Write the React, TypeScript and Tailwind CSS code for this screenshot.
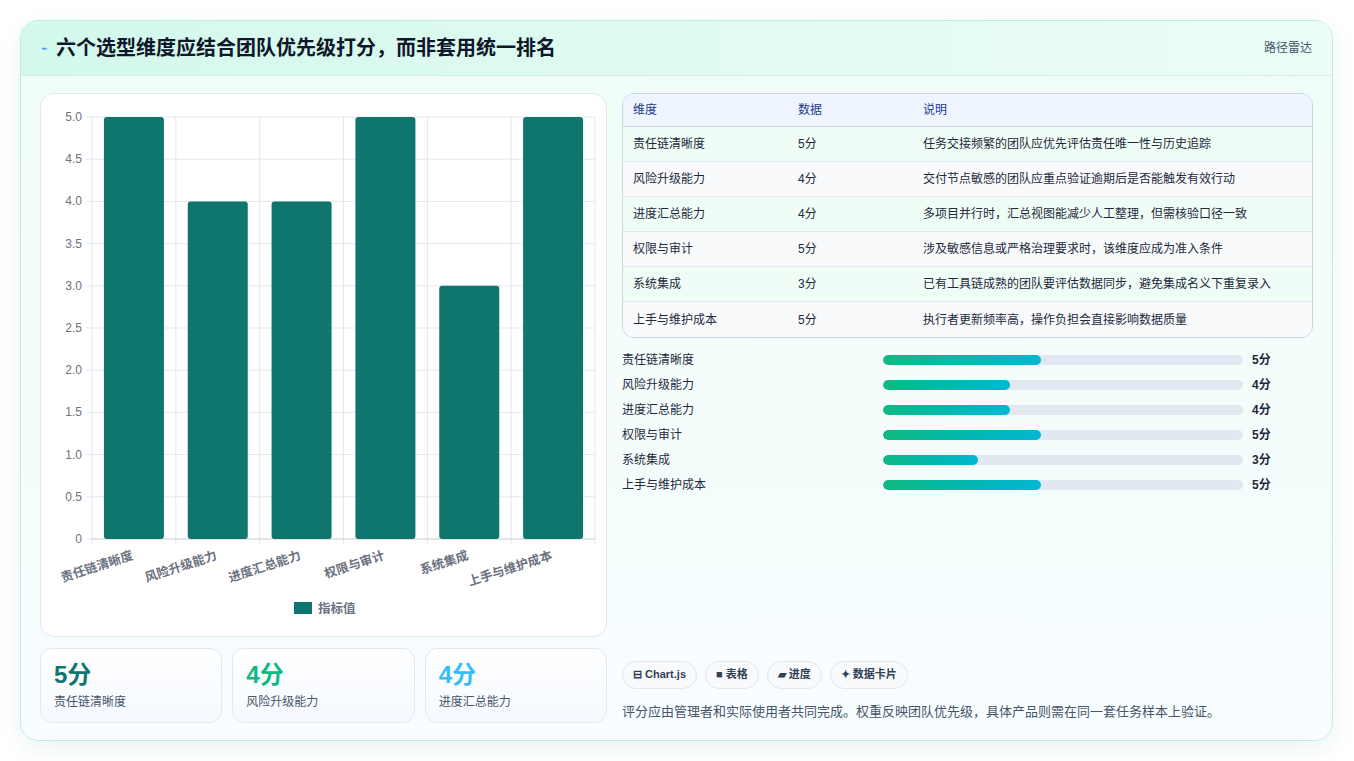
import React from "react";

const dims = [
  { n: "责任链清晰度", v: 5, d: "任务交接频繁的团队应优先评估责任唯一性与历史追踪" },
  { n: "风险升级能力", v: 4, d: "交付节点敏感的团队应重点验证逾期后是否能触发有效行动" },
  { n: "进度汇总能力", v: 4, d: "多项目并行时，汇总视图能减少人工整理，但需核验口径一致" },
  { n: "权限与审计", v: 5, d: "涉及敏感信息或严格治理要求时，该维度应成为准入条件" },
  { n: "系统集成", v: 3, d: "已有工具链成熟的团队要评估数据同步，避免集成名义下重复录入" },
  { n: "上手与维护成本", v: 5, d: "执行者更新频率高，操作负担会直接影响数据质量" },
];

function Chart() {
  const L = 51, R = 554, T = 23, B = 445;
  const cw = (R - L) / 6;
  const ticks = [0, 0.5, 1, 1.5, 2, 2.5, 3, 3.5, 4, 4.5, 5];
  const y = (v: number) => B - (v / 5) * (B - T);
  return (
    <svg width="564" height="541" style={{ fontFamily: "'Liberation Sans','Noto Sans CJK SC',sans-serif" }}>
      {ticks.map((t) => (
        <g key={t}>
          <line x1={L - 6} x2={R} y1={y(t)} y2={y(t)} stroke="#e5e7eb" />
          <text x={L - 10} y={y(t) + 4} fontSize="12" fill="#6b7280" textAnchor="end">
            {t === 0 ? "0" : t.toFixed(1)}
          </text>
        </g>
      ))}
      {Array.from({ length: 7 }).map((_, i) => (
        <line key={i} x1={L + i * cw} x2={L + i * cw} y1={T} y2={B + 6} stroke="#e5e7eb" />
      ))}
      <line x1={L} x2={R} y1={B} y2={B} stroke="#d1d5db" />
      {dims.map((d, i) => {
        const cx = L + cw * i + cw / 2;
        return (
          <g key={d.n}>
            <rect x={cx - 30} y={y(d.v)} width="60" height={B - y(d.v)} rx="3" fill="#0f766e" />
            <text
              x={cx}
              y={B + 20}
              fontSize="12.5"
              fontWeight="bold"
              fill="#6b7280"
              textAnchor="end"
              transform={`rotate(-18 ${cx} ${B + 20})`}
            >
              {d.n}
            </text>
          </g>
        );
      })}
      <rect x="253" y="508" width="18" height="12" fill="#0f766e" />
      <text x="277" y="519" fontSize="12.5" fontWeight="bold" fill="#6b7280">指标值</text>
    </svg>
  );
}

export default function App() {
  const font = { fontFamily: "'Liberation Sans','Noto Sans CJK SC',sans-serif" };
  const statColors = ["text-[#0f766e]", "text-[#10b981]", "text-[#38bdf8]"];
  return (
    <div style={font} className="w-[1354px] h-[761px] bg-white p-[20px] pb-[20px]">
      <div className="w-[1313px] h-[721px] rounded-[18px] border border-[#bfeee0] shadow-[0_8px_24px_rgba(15,118,110,0.08)] overflow-hidden bg-gradient-to-b from-[#f0fdf7] to-[#f8fdff] flex flex-col">
        <div className="h-[55px] shrink-0 flex items-center justify-between px-[20px] bg-gradient-to-r from-[#d3f8ec] to-[#ecfdf7] border-b border-[#d5efe8]">
          <div className="flex items-center gap-[8px]">
            <span className="text-[11px] text-[#3b82f6]">⌁</span>
            <span className="text-[20px] font-bold text-[#0f172a]">六个选型维度应结合团队优先级打分，而非套用统一排名</span>
          </div>
          <span className="text-[12px] text-[#475569]">路径雷达</span>
        </div>
        <div className="flex-1 flex gap-[15px] px-[19px] pt-[17px]">
          <div className="w-[567px] flex flex-col gap-[11px]">
            <div className="h-[544px] rounded-[14px] border border-[#e2e8f0] bg-white">
              <Chart />
            </div>
            <div className="grid grid-cols-3 gap-[10px]">
              {dims.slice(0, 3).map((d, i) => (
                <div key={d.n} className="h-[75px] rounded-[12px] border border-[#e2e8f0] bg-gradient-to-b from-white to-[#f5f9ff] px-[13px] pt-[12px]">
                  <div className={`text-[24px] font-bold leading-[28px] ${statColors[i]}`}>{d.v}分</div>
                  <div className="text-[12px] text-[#475569] mt-[4px]">{d.n}</div>
                </div>
              ))}
            </div>
          </div>
          <div className="flex-1 flex flex-col">
            <div className="rounded-[12px] border border-[#cbd5e1] overflow-hidden text-[12px] text-[#1e293b]">
              <div className="flex h-[33px] items-center bg-[#eef5ff] text-[#1e3a8a] border-b border-[#cbd5e1]">
                <div className="w-[175px] pl-[10px]">维度</div>
                <div className="w-[125px]">数据</div>
                <div>说明</div>
              </div>
              {dims.map((d, i) => (
                <div key={d.n} className={`flex h-[35px] items-center ${i % 2 === 0 ? "bg-[#f0fdf6]" : "bg-[#f8fafc]"} ${i < 5 ? "border-b border-[#e2e8f0]" : ""}`}>
                  <div className="w-[175px] pl-[10px]">{d.n}</div>
                  <div className="w-[125px]">{d.v}分</div>
                  <div>{d.d}</div>
                </div>
              ))}
            </div>
            <div className="mt-[9px] flex flex-col">
              {dims.map((d) => (
                <div key={d.n} className="h-[25px] flex items-center text-[12px] text-[#1e293b]">
                  <div className="w-[261px]">{d.n}</div>
                  <div className="w-[360px] h-[10px] rounded-full bg-[#e2e8f0] overflow-hidden">
                    <div className="h-full rounded-full bg-gradient-to-r from-[#10b981] to-[#06b6d4]" style={{ width: `${(d.v / 5) * 44}%` }} />
                  </div>
                  <div className="ml-[9px] font-bold">{d.v}分</div>
                </div>
              ))}
            </div>
            <div className="flex-1" />
            <div className="flex gap-[8px] text-[11px] font-bold text-[#334155]">
              <span className="h-[28px] px-[10px] flex items-center rounded-full border border-[#e2e8f0] bg-[#f8fafc]">⊟ Chart.js</span>
              <span className="h-[28px] px-[10px] flex items-center rounded-full border border-[#e2e8f0] bg-[#f8fafc]">■ 表格</span>
              <span className="h-[28px] px-[10px] flex items-center rounded-full border border-[#e2e8f0] bg-[#f8fafc]">▰ 进度</span>
              <span className="h-[28px] px-[10px] flex items-center rounded-full border border-[#e2e8f0] bg-[#f8fafc]">✦ 数据卡片</span>
            </div>
            <div className="mt-[13px] mb-[19px] text-[13px] text-[#475569]">评分应由管理者和实际使用者共同完成。权重反映团队优先级，具体产品则需在同一套任务样本上验证。</div>
          </div>
        </div>
      </div>
    </div>
  );
}
